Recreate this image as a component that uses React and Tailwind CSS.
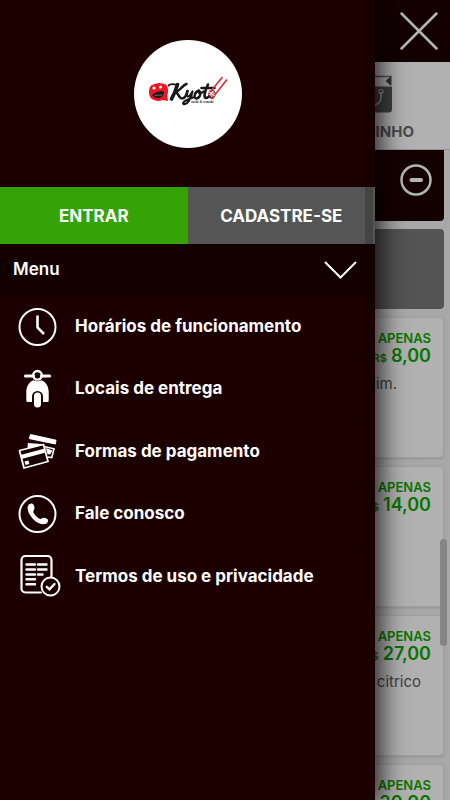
import { useState } from 'react';

const products = [
  { id: 1, price: '8,00', text: 'Gengibre e gergelim.', pad: 'pr-[46px]' },
  { id: 2, price: '14,00', text: '', pad: 'pr-3' },
  { id: 3, price: '27,00', text: 'Molho citrico', pad: 'pr-[22px]' },
  { id: 4, price: '30,00', text: '', pad: 'pr-3' },
];

const menuItems = [
  { label: 'Horários de funcionamento', icon: ClockIcon },
  { label: 'Locais de entrega', icon: ScooterIcon },
  { label: 'Formas de pagamento', icon: CardsIcon },
  { label: 'Fale conosco', icon: PhoneIcon },
  { label: 'Termos de uso e privacidade', icon: TermsIcon },
];

// --- ICONS ---

function ClockIcon() {
  return (
    <svg viewBox="0 0 48 48" className="size-12" fill="none" stroke="white" strokeWidth="2">
      <circle cx="23.5" cy="24" r="18" />
      <path d="M23.5 12.5V24.5L30 31" strokeWidth="2.6" />
    </svg>
  );
}

function ScooterIcon() {
  return (
    <svg viewBox="0 0 48 48" className="size-12" fill="none">
      <path d="M11.5 11h8M27.5 11h8" stroke="white" strokeWidth="3.2" strokeLinecap="round" />
      <circle cx="23.5" cy="10.3" r="4.3" stroke="white" strokeWidth="2.4" />
      <path d="M19.5 15.2C15 17 12.3 21.5 12.3 27V35.5Q12.3 37 13.8 37H18V31.5A5.5 5.5 0 0 1 29 31.5V37H33.2Q34.7 37 34.7 35.5V27C34.7 21.5 32 17 27.5 15.2Q23.5 17.5 19.5 15.2Z" fill="white" />
      <rect x="20" y="27.6" width="7" height="15" rx="3.5" fill="white" />
    </svg>
  );
}

function CardsIcon() {
  return (
    <svg viewBox="0 0 48 48" className="size-12" fill="none">
      <path d="M16.5 7.5L42 13.2L41.4 17L15.3 11.6Z" fill="white" stroke="white" strokeLinejoin="round" />
      <path d="M13.8 16L30.5 17.2L20 20L13.5 21.8Z" fill="white" />
      <path d="M30 19.5L40 21.8L37.800 30.500L33.500 30" stroke="white" strokeWidth="1.6" />
      <path d="M32 21L38.5 23.5L36 27.5L33.5 27Z" fill="white" />
      <path d="M5.5 23.5L29.5 17.5L34 34.5L10 41Z" stroke="white" strokeWidth="1.8" strokeLinejoin="round" />
      <path d="M6.5 28L30.8 21.5L31.8 25.5L7.5 32Z" fill="white" />
      <path d="M10.5 34.5L14.5 33.5L15.4 37L11.5 38Z" fill="white" />
    </svg>
  );
}

function PhoneIcon() {
  return (
    <svg viewBox="0 0 48 48" className="size-12" fill="none">
      <circle cx="23.5" cy="24" r="18" stroke="white" strokeWidth="2" />
      <path d="M13.8 16.5C14.5 14 17 13 18.8 14C20.5 15 21 18.5 19.8 20.2C19 21.5 19.2 22.3 20.2 23.8C21.5 25.8 23.2 27.5 25 28.5C26.2 29.2 27 29 28 28.2C29.7 27 33 28 33.9 29.8C34.6 31.5 33 33.6 30.8 34.1C27.5 34.7 23 33 19.2 29.2C15 25 13 20 13.8 16.5Z" fill="white" />
    </svg>
  );
}

function TermsIcon() {
  return (
    <svg viewBox="0 0 48 48" className="size-12" fill="none" stroke="white" strokeLinecap="round">
      <path d="M27 39.5H11.500A4 4 0 0 1 7.500 35.500V7A4 4 0 0 1 11.500 3H33.500A4 4 0 0 1 37.500 7V24" strokeWidth="2.2" />
      <path d="M12.5 11.5H21M12.5 16.5H21M12.5 21.5H21M12.5 26.3H21M12.5 31.2H21M24 11.5H32.5M24 16.5H32.5M24 21.5H28.5" strokeWidth="2.4" />
      <circle cx="36.5" cy="33.5" r="9" strokeWidth="2" />
      <path d="M32.8 33.8L35.5 36.3L40.5 31" strokeWidth="2.4" />
    </svg>
  );
}

function KyotoLogo() {
  return (
    <div className="flex size-[108px] items-center justify-center rounded-full bg-white">
      <svg viewBox="0 0 80 36" className="h-9 w-20" role="img" aria-label="Kyoto">
        <path d="M3 9.5Q10 5 18 8.500Q21.500 13.500 19.200 20L20 25L14.500 24Q8 26.500 2.500 22Q-1 14.500 3 9.500Z" fill="#ee1424" />
        <circle cx="6" cy="12" r="1.6" fill="white" />
        <circle cx="12.500" cy="11" r="1.6" fill="white" />
        <path d="M4 19Q9.5 14 16 15.500Q15.500 21.500 10.500 22.300Q5.500 22 4 19Z" fill="#181818" />
        <path d="M6.500 19.800Q10.500 18.500 14 19.200" stroke="#999" strokeWidth="0.7" fill="none" />
        <g fill="none" stroke="#181818" strokeLinecap="round" strokeLinejoin="round">
          <path d="M20.500 9.500Q23 7 29 9" strokeWidth="1.8" />
          <path d="M29.5 8.5Q27 17 23.5 23" strokeWidth="3.6" />
          <path d="M38.5 8C35 9 31.5 15 27 16.500C30.5 15.5 30 22 34 22.5C37 22.5 38.5 19 39.5 15" strokeWidth="2.6" />
          <path d="M39.5 15C37.5 22 40.5 22.5 44.5 15.5C43 23 39 29.5 35.5 28C33.5 26.5 39 23.5 45 21.5" strokeWidth="2.2" />
          <path d="M51 14.5C46.5 15.5 45 22.5 48.5 22.5C52.5 22 54 14.5 50.5 15.5C51.5 18.5 54 17 55.5 15.5" strokeWidth="2.4" />
          <path d="M60 8.5C57 15 55 21.5 58 22C60 22 61.5 20 62.5 18M53.5 12H66.5" strokeWidth="2.6" />
          <path d="M64.5 14.5C61 16.5 61 22 64 22C67 21.5 68 16 64.5 14.5" strokeWidth="1.8" />
        </g>
        <path d="M61 14L66 15L68 19L64 22L60.5 18.500Z" fill="#d98a90" />
        <path d="M74.5 1L60.5 18M79 3.5L63.5 23" stroke="#d8303c" strokeWidth="1.7" />
        <path d="M61 16L67 20M62 19L65 15" stroke="white" strokeWidth="0.8" />
        <text x="43" y="27" fontSize="3.500" fontWeight="700" fill="#333" fontFamily="Liberation Serif, serif">sushi &amp; temaki</text>
      </svg>
    </div>
  );
}

function BagIcon() {
  return (
    <svg viewBox="0 0 36 38" className="h-[38px] w-9" fill="none">
      <path d="M1 11V5L5 1.5H35V10" stroke="#505050" strokeWidth="1.3" />
      <path d="M35 1V11L29.5 6Z" fill="#333" />
      <path d="M0 11.5H36V34Q36 37.5 33 37.5H3Q0 37.5 0 34Z" fill="#404040" />
      <path d="M11 17V22C11 32.5 25 32.5 25 22V17" stroke="#929292" strokeWidth="1.6" />
      <circle cx="25" cy="16.5" r="2" stroke="#929292" strokeWidth="1.2" />
      <circle cx="11" cy="16.5" r="2" stroke="#929292" strokeWidth="1.2" />
    </svg>
  );
}

// --- STORE PAGE (behind the drawer) ---

function ProductCard({ product }) {
  return (
    <article className="h-[141px] shrink-0 rounded border border-[#a0a0a0] bg-[#b1b1b1] pt-3 text-right shadow-sm">
      <div className="pr-3 font-semibold text-[#087500]">
        <p className="text-[13px] leading-4">APENAS</p>
        <p className="flex items-baseline justify-end gap-1 text-[18px] leading-5">
          <span className="text-[11px]">R$</span>
          <span>{product.price}</span>
        </p>
      </div>
      <p className={`mt-[6px] text-[15px] leading-5 text-[#404040] ${product.pad}`}>{product.text}</p>
    </article>
  );
}

function Store({ onClose }) {
  return (
    <div className="flex h-full flex-col">
      <header className="flex h-[62px] shrink-0 items-center justify-end bg-[#140000] pr-3">
        <button aria-label="Fechar" onClick={onClose}>
          <svg viewBox="0 0 38 38" className="size-[38px]" stroke="#b5b5b5" strokeWidth="2.5" strokeLinecap="round">
            <path d="M1.5 1.5L36.5 36.5M36.5 1.5L1.5 36.5" />
          </svg>
        </button>
      </header>
      <nav className="flex h-[88px] shrink-0 justify-end border-b border-[#929292] bg-[#b1b1b1] pr-9">
        <a href="#carrinho" className="flex flex-col items-center pt-[13px]">
          <BagIcon />
          <span className="mt-[9px] text-[15px] leading-5 font-bold text-[#4a4a4a]">CARRINHO</span>
        </a>
      </nav>
      <main className="flex flex-1 flex-col gap-2 overflow-hidden pr-[6px] pl-2">
        <div className="flex h-[71px] shrink-0 items-center justify-end rounded-b bg-[#150000] pr-3">
          <button aria-label="Recolher">
            <svg viewBox="0 0 32 32" className="mb-3 size-8" fill="none" stroke="#b5b5b5">
              <circle cx="16" cy="16" r="14.5" strokeWidth="2.5" />
              <path d="M11.5 16H21" strokeWidth="4" strokeLinecap="round" />
            </svg>
          </button>
        </div>
        <div className="h-20 shrink-0 rounded bg-[#545454]" />
        {products.map((p) => (
          <ProductCard key={p.id} product={p} />
        ))}
      </main>
    </div>
  );
}

// --- DRAWER ---

function Drawer() {
  const [expanded, setExpanded] = useState(true);

  return (
    <aside className="absolute inset-y-0 left-0 w-5/6 bg-[#1c0000] text-white shadow-[2px_0_24px_4px_rgba(0,0,0,0.8)]">
      <div className="flex h-[187px] items-center justify-center">
        <KyotoLogo />
      </div>
      <div className="grid h-[57px] grid-cols-2 text-[17px] font-bold">
        <button className="bg-[#35a205] pt-[2px]">ENTRAR</button>
        <button className="bg-[#555555] pt-[2px]">CADASTRE-SE</button>
      </div>
      <button
        onClick={() => setExpanded(!expanded)}
        aria-expanded={expanded}
        className="flex h-[52px] w-full items-center justify-between bg-[#140000] pr-[18px] pl-[13px] text-[17px] font-semibold"
      >
        Menu
        <svg viewBox="0 0 33 18" className="h-[18px] w-[33px]" fill="none" stroke="white" strokeWidth="2">
          <path d="M1 1L16.5 16.5L32 1" />
        </svg>
      </button>
      {expanded && (
        <ul className="grid h-[312px] grid-rows-5">
          {menuItems.map(({ label, icon: Icon }) => (
            <li key={label} className="border-b border-[#160000] last:border-0">
              <a href="#menu" className="flex h-full items-center gap-[13px] pl-[14px] text-[17px] font-bold">
                <Icon />
                {label}
              </a>
            </li>
          ))}
        </ul>
      )}
      {/* drawer scroll thumb */}
      <div className="absolute top-0 right-[2px] h-[605px] w-2 rounded-b-full bg-black/20" />
    </aside>
  );
}

export default function App() {
  const [open, setOpen] = useState(true);

  return (
    <div className="relative h-screen overflow-hidden bg-[#a8a8a8] font-['Inter','Liberation_Sans',sans-serif]">
      <Store onClose={() => setOpen(!open)} />
      {/* page scroll thumb */}
      <div className="absolute top-[539px] right-[3px] h-[107px] w-[7px] rounded-full bg-[#858585]" />
      {open && <Drawer />}
    </div>
  );
}
